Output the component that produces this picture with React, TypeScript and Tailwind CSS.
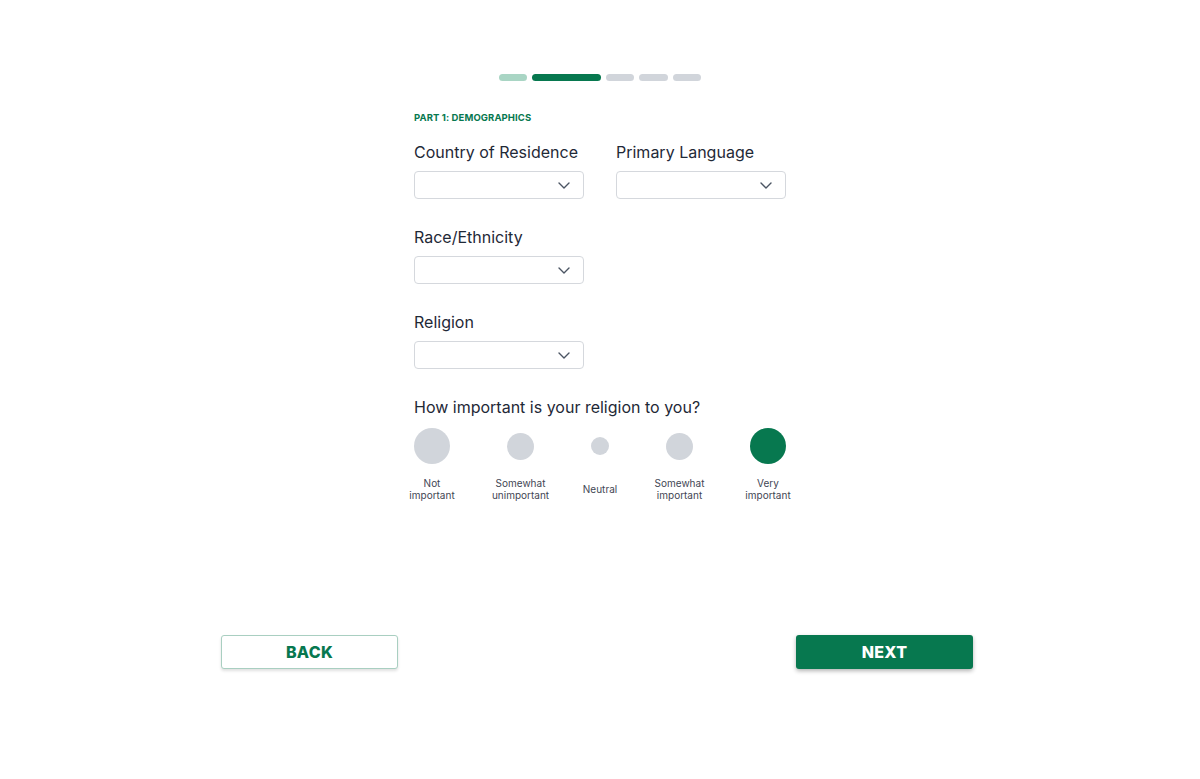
import React from "react";

const GREEN = "#07784f";

function Chevron() {
  return (
    <svg width="12" height="7" viewBox="0 0 12 7" fill="none" className="shrink-0">
      <path d="M1 1l5 5 5-5" stroke="#4b5563" strokeWidth="1.4" strokeLinecap="round" strokeLinejoin="round" />
    </svg>
  );
}

function SelectField({ label }: { label: string }) {
  return (
    <div className="flex flex-col w-[170px]">
      <div className="text-[16px] leading-[20px] text-[#1f2937] whitespace-nowrap">{label}</div>
      <div className="mt-[9px] h-[28px] w-[170px] rounded-[4px] border border-[#d5d8dd] bg-white flex items-center justify-end pr-[13px]">
        <Chevron />
      </div>
    </div>
  );
}

const scale = [
  { size: 36, label: ["Not", "important"], active: false },
  { size: 27, label: ["Somewhat", "unimportant"], active: false },
  { size: 18, label: ["Neutral"], active: false },
  { size: 27, label: ["Somewhat", "important"], active: false },
  { size: 36, label: ["Very", "important"], active: true },
];

export default function App() {
  return (
    <div
      className="w-[1200px] h-[779px] bg-white overflow-hidden"
      style={{ fontFamily: "Inter, 'Noto Sans', sans-serif" }}
    >
      <div className="pt-[74px] flex justify-center gap-[5px]">
        <div className="h-[7px] w-[28px] rounded-full bg-[#a9d5c4]" />
        <div className="h-[7px] w-[69px] rounded-full bg-[#07784f]" />
        <div className="h-[7px] w-[28px] rounded-full bg-[#d1d5db]" />
        <div className="h-[7px] w-[29px] rounded-full bg-[#d1d5db]" />
        <div className="h-[7px] w-[28px] rounded-full bg-[#d1d5db]" />
      </div>

      <div className="w-[372px] mx-auto">
        <div className="mt-[31px] text-[9.5px] leading-[12px] font-bold tracking-[0.1px] text-[#07784f]">
          PART 1: DEMOGRAPHICS
        </div>

        <div className="mt-[18px] flex gap-[32px]">
          <SelectField label="Country of Residence" />
          <SelectField label="Primary Language" />
        </div>
        <div className="mt-[28px]">
          <SelectField label="Race/Ethnicity" />
        </div>
        <div className="mt-[28px]">
          <SelectField label="Religion" />
        </div>

        <div className="mt-[28px] text-[16px] leading-[20px] text-[#1f2937] whitespace-nowrap">
          How important is your religion to you?
        </div>

        <div className="mt-[11px] flex justify-between items-center h-[36px]">
          {scale.map((s, i) => (
            <div
              key={i}
              className={`rounded-full ${s.active ? "bg-[#07784f]" : "bg-[#d1d5db]"}`}
              style={{ width: s.size, height: s.size }}
            />
          ))}
        </div>
        <div className="mt-[13px] flex justify-between items-center h-[24px]">
          {scale.map((s, i) => (
            <div key={i} className="relative flex justify-center" style={{ width: s.size }}>
              <div className="text-[10px] leading-[12px] text-[#3f4654] text-center whitespace-nowrap">
                {s.label.map((l, j) => (
                  <div key={j}>{l}</div>
                ))}
              </div>
            </div>
          ))}
        </div>
      </div>

      <div className="mt-[134px] ml-[221px] w-[752px] flex justify-between">
        <button className="w-[177px] h-[34px] rounded-[3px] border border-[#a9cfc1] bg-white shadow-[0_2px_3px_rgba(0,0,0,0.12)] text-[16px] font-extrabold tracking-[0.3px]" style={{ color: GREEN }}>
          BACK
        </button>
        <button className="w-[177px] h-[34px] rounded-[3px] bg-[#07784f] text-white shadow-[0_2px_4px_rgba(0,0,0,0.3)] text-[16px] font-extrabold tracking-[0.3px]">
          NEXT
        </button>
      </div>
    </div>
  );
}
